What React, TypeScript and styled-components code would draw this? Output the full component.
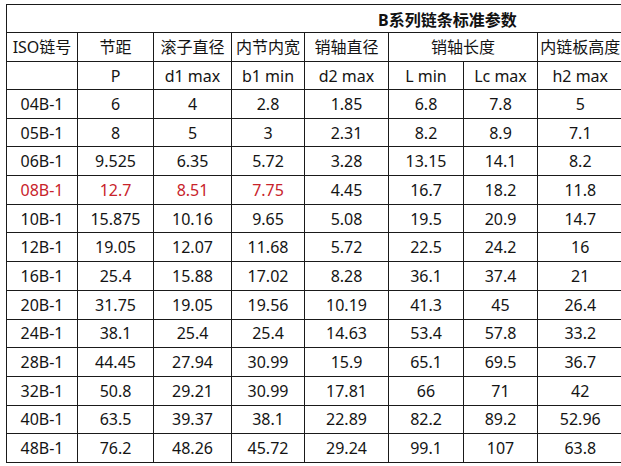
import React from "react";
import styled, { createGlobalStyle } from "styled-components";

const Global = createGlobalStyle`
  html, body {
    margin: 0;
    padding: 0;
    background: #ffffff;
    overflow: hidden;
  }
  body {
    font-family: "Noto Sans", "Noto Sans CJK SC", sans-serif;
  }
`;

const Page = styled.div`
  width: 621px;
  height: 466px;
  overflow: hidden;
  padding: 4px 0 0 6px;
  box-sizing: border-box;
  background: #fff;
`;

const Table = styled.table`
  border-collapse: collapse;
  table-layout: fixed;
  width: 616px;
  font-size: 16px;
  color: #141414;
`;

const TitleCell = styled.td`
  height: 27px;
  padding: 0 0 0 371px;
  border-top: 1px solid #1a1a1a;
  border-left: 1px solid #1a1a1a;
  border-bottom: 1px solid #1a1a1a;
  border-right: none;
  font-weight: bold;
  text-align: left;
  color: #111;
  white-space: nowrap;
`;

const Cell = styled.td<{ $red?: boolean; $h?: number; $last?: boolean }>`
  height: ${(p) => p.$h ?? 27.7}px;
  padding: 0;
  border: 1px solid #1a1a1a;
  border-right: ${(p) => (p.$last ? "none" : "1px solid #1a1a1a")};
  text-align: center;
  vertical-align: middle;
  white-space: nowrap;
  color: ${(p) => (p.$red ? "#c8232b" : "#141414")};
  line-height: 1;
`;

const widths = [71, 76, 78, 73, 84, 75, 74, 85];

const rows: string[][] = [
  ["04B-1", "6", "4", "2.8", "1.85", "6.8", "7.8", "5"],
  ["05B-1", "8", "5", "3", "2.31", "8.2", "8.9", "7.1"],
  ["06B-1", "9.525", "6.35", "5.72", "3.28", "13.15", "14.1", "8.2"],
  ["08B-1", "12.7", "8.51", "7.75", "4.45", "16.7", "18.2", "11.8"],
  ["10B-1", "15.875", "10.16", "9.65", "5.08", "19.5", "20.9", "14.7"],
  ["12B-1", "19.05", "12.07", "11.68", "5.72", "22.5", "24.2", "16"],
  ["16B-1", "25.4", "15.88", "17.02", "8.28", "36.1", "37.4", "21"],
  ["20B-1", "31.75", "19.05", "19.56", "10.19", "41.3", "45", "26.4"],
  ["24B-1", "38.1", "25.4", "25.4", "14.63", "53.4", "57.8", "33.2"],
  ["28B-1", "44.45", "27.94", "30.99", "15.9", "65.1", "69.5", "36.7"],
  ["32B-1", "50.8", "29.21", "30.99", "17.81", "66", "71", "42"],
  ["40B-1", "63.5", "39.37", "38.1", "22.89", "82.2", "89.2", "52.96"],
  ["48B-1", "76.2", "48.26", "45.72", "29.24", "99.1", "107", "63.8"],
];

const units = ["", "P", "d1 max", "b1 min", "d2 max", "L min", "Lc max", "h2 max"];

export default function App() {
  return (
    <>
      <Global />
      <Page>
        <Table>
          <colgroup>
            {widths.map((w, i) => (
              <col key={i} style={{ width: w }} />
            ))}
          </colgroup>
          <tbody>
            <tr>
              <TitleCell colSpan={8}>B系列链条标准参数</TitleCell>
            </tr>
            <tr>
              <Cell $h={28}>ISO链号</Cell>
              <Cell $h={28}>节距</Cell>
              <Cell $h={28}>滚子直径</Cell>
              <Cell $h={28}>内节内宽</Cell>
              <Cell $h={28}>销轴直径</Cell>
              <Cell $h={28} colSpan={2}>销轴长度</Cell>
              <Cell $h={28} $last>内链板高度</Cell>
            </tr>
            <tr>
              {units.map((u, i) => (
                <Cell key={i} $h={27} $last={i === 7}>
                  {u}
                </Cell>
              ))}
            </tr>
            {rows.map((r) => (
              <tr key={r[0]}>
                {r.map((v, i) => (
                  <Cell key={i} $red={r[0] === "08B-1" && i < 4} $last={i === 7}>
                    {v}
                  </Cell>
                ))}
              </tr>
            ))}
          </tbody>
        </Table>
      </Page>
    </>
  );
}
